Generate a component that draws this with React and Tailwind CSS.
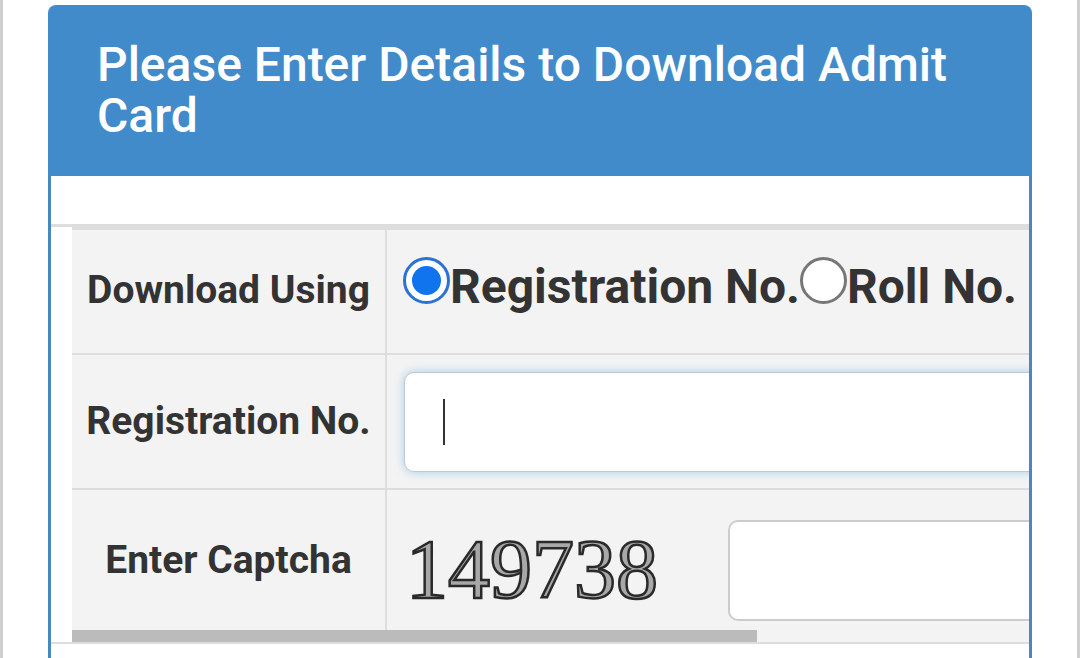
import React from 'react';

// Admit card download form (zoomed mobile view)
const Radio = ({ checked }) => {
  if (checked) {
    return (
      <span className="flex w-[47px] h-[47px] shrink-0 items-center justify-center rounded-full border-[3px] border-[#2a72d4] bg-white">
        <span className="block w-[29px] h-[29px] rounded-full bg-[#0f74ee]" />
      </span>
    );
  }
  return <span className="block w-[47px] h-[47px] shrink-0 rounded-full border-[3px] border-[#777] bg-white" />;
};

function App() {
  return (
    <div className="flex h-[658px] w-[1080px] overflow-hidden bg-white font-['Roboto',_'Liberation_Sans',_sans-serif]">
      <div className="w-[3px] shrink-0 bg-[#cfcfcf]" />

      <div className="ml-[45px] mt-[5px] w-[984px] shrink-0">
        {/* Header */}
        <div className="h-[171px] rounded-t-lg bg-[#428bca] pl-[49px] pr-[30px] pt-[34px]">
          <h3 className="text-[48px] leading-[51px] font-medium text-white">
            Please Enter Details to Download Admit Card
          </h3>
        </div>

        {/* Body */}
        <div className="h-[600px] border-x-[3px] border-[#4a86c0] bg-white pt-[48px]">
          <div className="flex border-t-[3px] border-b-[2px] border-[#dddddd]">
            <div className="w-[21px] shrink-0 bg-white" />
            <div className="relative flex-1 overflow-hidden border-t-[3px] border-[#dddddd] bg-[#f3f3f3] text-[#333]">
              {/* Row 1 */}
              <div className="flex h-[125px] border-b-[2px] border-[#dddddd]">
                <div className="flex w-[315px] shrink-0 items-center justify-center border-r-[2px] border-[#dddddd] pb-[2px] text-[39px] font-bold">
                  Download Using
                </div>
                <div className="flex items-start whitespace-nowrap pl-[16px] pt-[27px] text-[48px] font-bold leading-[48px]">
                  <Radio checked />
                  <span className="mt-[6px]">Registration No.</span>
                  <Radio />
                  <span className="mt-[6px]">Roll No.</span>
                </div>
              </div>

              {/* Row 2 */}
              <div className="flex h-[135px] border-b-[2px] border-[#dddddd]">
                <div className="flex w-[315px] shrink-0 items-center justify-center border-r-[2px] border-[#dddddd] text-[39px] font-bold">
                  Registration No.
                </div>
                <div className="pl-[17px] pt-[17px]">
                  <div className="flex h-[100px] w-[720px] items-center rounded-[10px] border border-[#c4c8cc] bg-white pl-[38px] shadow-[0_0_10px_rgba(102,175,233,0.55)]">
                    <span className="block h-[46px] w-[2px] bg-[#333]" />
                  </div>
                </div>
              </div>

              {/* Row 3 */}
              <div className="flex h-[152px]">
                <div className="flex w-[315px] shrink-0 items-center justify-center border-r-[2px] border-[#dddddd] pb-[12px] text-[39px] font-bold">
                  Enter Captcha
                </div>
                <div className="flex items-start whitespace-nowrap pl-[19px]">
                  <span className="mt-[38px] font-['Liberation_Serif',_serif] text-[84px] leading-[84px] text-[#a8a8a8] [-webkit-text-stroke:2.5px_#2a2a2a]">
                    149738
                  </span>
                  <div className="ml-[70px] mt-[30px] h-[101px] w-[500px] shrink-0 rounded-[10px] border-[2px] border-[#cccccc] bg-white" />
                </div>
              </div>

              {/* overlay scrollbar */}
              <div className="absolute bottom-0 left-0 h-[12px] w-[685px] bg-[#bbbbbb]" />
            </div>
          </div>
        </div>
      </div>

      <div className="ml-auto w-[3px] shrink-0 bg-[#cfcfcf]" />
    </div>
  );
}

export default App;
